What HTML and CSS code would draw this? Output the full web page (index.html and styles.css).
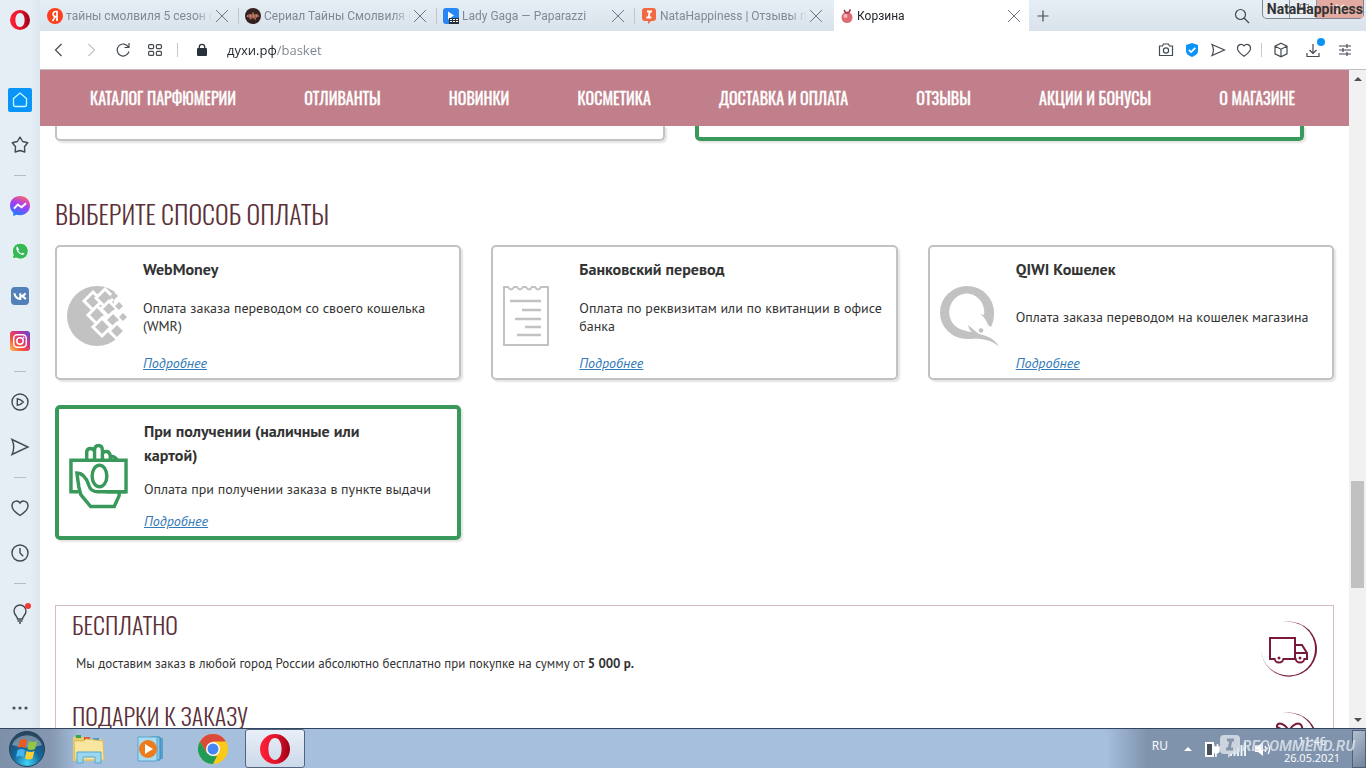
FILE: index.html
```html
<!DOCTYPE html>
<html lang="ru">
<head>
<meta charset="utf-8">
<title>Корзина</title>
<link rel="stylesheet" href="styles.css">
</head>
<body>
<div class="desktop">
  <div class="browser">
    <aside class="sidebar">
      <button class="side-logo" aria-label="Opera">
        <svg width="22" height="22" viewBox="0 0 22 22"><defs><linearGradient id="op" x1="0" x2="1"><stop offset="0" stop-color="#ff2038"/><stop offset=".55" stop-color="#e0142c"/><stop offset="1" stop-color="#9c0014"/></linearGradient></defs><path fill="url(#op)" fill-rule="evenodd" d="M11 1a10 10 0 1 0 0 20a10 10 0 1 0 0-20zM11 4c3 0 4.600 3 4.600 7s-1.600 7-4.600 7s-4.600-3-4.600-7s1.600-7 4.600-7z"/></svg>
      </button>
      <button class="side-item" aria-label="Домой"><svg width="24" height="24" viewBox="0 0 24 24"><rect width="24" height="24" rx="2" fill="#0a94f8"/><path d="M5.500 10.500L12 5l6.500 5.500v6a2 2 0 0 1-2 2h-9a2 2 0 0 1-2-2z" fill="none" stroke="#c8ffff" stroke-width="1.300"/></svg></button>
      <button class="side-item" aria-label="Закладки"><svg class="line" width="20" height="20" viewBox="0 0 20 20" stroke-linejoin="round"><path d="M10 2.200l2.700 4.300 5 1.300-3.200 4 .3 5.200-4.800-1.500L5.200 17l.3-5.200-3.200-4 5-1.300z"/></svg></button>
      <hr class="side-sep">
      <button class="side-item" aria-label="Messenger"><svg width="20" height="20" viewBox="0 0 20 20"><defs><linearGradient id="ms" x1=".7" y1="0" x2=".3" y2="1"><stop offset="0" stop-color="#ff6568"/><stop offset=".45" stop-color="#a43cf8"/><stop offset="1" stop-color="#1684ff"/></linearGradient></defs><path fill="url(#ms)" d="M10 0C4.300 0 0 4.100 0 9.500c0 2.900 1.200 5.400 3.200 7.100V20l3.300-1.300c1 .3 2.200.5 3.500.5 5.700 0 10-4.300 10-9.700S15.700 0 10 0z"/><path d="M4 12.700l3.800-4.200 3.800 2.700 4.400-4" fill="none" stroke="#fff" stroke-width="2"/></svg></button>
      <button class="side-item" aria-label="WhatsApp"><svg width="18" height="18" viewBox="0 0 18 18"><path d="M1 17l1.200-4.200A8 8 0 1 1 5.200 16z" fill="#34b954" stroke="#f6fffa"/><path d="M6.200 4.600c-1.700 1-.8 4 1.300 6.100s4.900 3.100 6.100 1.100l-2.300-1.400-1 1c-1.400-.6-2.400-1.700-3-3l.9-1z" fill="#fff"/></svg></button>
      <button class="side-item" aria-label="ВКонтакте"><svg width="18" height="18" viewBox="0 0 18 18"><rect width="18" height="18" rx="4" fill="#5181b8"/><path d="M3.300 6.300c.8 3.800 2.600 5.600 6 5.600V6.200M14.400 6.200c-.8 1.700-2.300 2.900-5 3M9.500 9c2.600 0 4 1.300 5.300 3.200" fill="none" stroke="#fff" stroke-width="2"/></svg></button>
      <button class="side-item" aria-label="Instagram"><svg width="20" height="20" viewBox="0 0 20 20"><defs><linearGradient id="ig" x1="0" y1="1" x2="1" y2="0"><stop offset="0" stop-color="#ffc653"/><stop offset=".35" stop-color="#f4513e"/><stop offset=".65" stop-color="#cf2e8c"/><stop offset="1" stop-color="#5450cf"/></linearGradient></defs><rect width="20" height="20" rx="3" fill="url(#ig)"/><g fill="none" stroke="#fff" stroke-width="1.500"><rect x="3.700" y="3.700" width="12.600" height="12.600" rx="3.500"/><circle cx="10" cy="10" r="3.200"/></g><circle cx="13.600" cy="6.400" r=".9" fill="#fff"/></svg></button>
      <hr class="side-sep">
      <button class="side-item" aria-label="Плеер"><svg class="line" width="20" height="20" viewBox="0 0 20 20"><circle cx="10" cy="10" r="8"/><path d="M7.300 6.700q3.500.5 6 3.300q-2.500 2.800-6 3.300z"/></svg></button>
      <button class="side-item" aria-label="Моя лента"><svg class="line" width="20" height="20" viewBox="0 0 20 20"><path d="M2 2.500L18 10 2 17.500Q5.500 10 2 2.500z"/></svg></button>
      <hr class="side-sep">
      <button class="side-item" aria-label="Избранное"><svg class="line" width="20" height="20" viewBox="0 0 20 20"><path d="M10 5C7.500 1.600 2 3 2 7.800c0 3.300 3.600 6.900 8 9.700 4.400-2.800 8-6.400 8-9.700C18 3 12.500 1.600 10 5z"/></svg></button>
      <button class="side-item" aria-label="История"><svg class="line" width="20" height="20" viewBox="0 0 20 20"><circle cx="10" cy="10" r="8"/><path d="M10 5v5l3.200 3.200"/></svg></button>
      <hr class="side-sep">
      <button class="side-item" aria-label="Советы"><svg width="24" height="24" viewBox="0 0 24 24"><path class="line" d="M9.500 17c0-3-3.500-3.700-3.500-8a6 6 0 0 1 12 0c0 4.300-3.500 5-3.500 8zM9.500 19h5M11 21h2"/><circle cx="20" cy="4" r="3" fill="#f23a34"/></svg></button>
      <button class="side-more" aria-label="Ещё"><svg width="20" height="6" viewBox="0 0 20 6" fill="#4b525a"><circle cx="4" cy="3" r="1.600"/><circle cx="10" cy="3" r="1.600"/><circle cx="16" cy="3" r="1.600"/></svg></button>
    </aside>

    <div class="window">
      <header class="tabs">
        <div class="tab">
          <svg width="16" height="16" viewBox="0 0 16 16"><circle cx="8" cy="8" r="8" fill="#fc3f1d"/><path d="M10 13V3.500H8.600c-3.300 0-3.200 5 0 5H10M8.500 8.500L5.500 13" fill="none" stroke="#fff" stroke-width="1.700"/></svg>
          <button class="tab-title">тайны смолвиля 5 сезон с</button><button class="close" aria-label="Закрыть"></button>
        </div>
        <div class="tab">
          <svg width="16" height="16" viewBox="0 0 16 16"><circle cx="8" cy="8" r="8" fill="#33211f"/><path d="M1.500 8.500q3-4 5-2l1.500-3 1.500 3q3-2 5 2l-3 1-1 3-1.500-2h-2L5 12l-1-2.500z" fill="#a2624f"/><path d="M2 8h12" stroke="#e3c5b9" stroke-dasharray="1 2"/></svg>
          <button class="tab-title">Сериал Тайны Смолвиля (</button><button class="close" aria-label="Закрыть"></button>
        </div>
        <div class="tab">
          <svg width="16" height="16" viewBox="0 0 16 16"><rect width="16" height="16" rx="3" fill="#2787f5"/><path d="M5 3.500v8L11 7.500z" fill="#fff"/><path d="M6 10h10v6H6z" fill="#263238"/><path d="M7 11h2v1H7zm3 0h2v1h-2zm3 0h2v1h-2zM7 13h2v1H7zm3 0h2v1h-2zm3 0h2v1h-2z" fill="#fff"/></svg>
          <button class="tab-title">Lady Gaga — Paparazzi</button><button class="close" aria-label="Закрыть"></button>
        </div>
        <div class="tab">
          <svg width="16" height="16" viewBox="0 0 16 16"><path d="M4 0h8q3 0 3 3v7q0 3-3 3h-2l-3 3v-3H4q-3 0-3-3V3q0-3 3-3z" fill="#f26842"/><path d="M6 3.500h5M5.300 9.500h5M8.700 3.500l-1 6" stroke="#fff" stroke-width="1.800"/></svg>
          <button class="tab-title">NataHappiness | Отзывы п</button><button class="close" aria-label="Закрыть"></button>
        </div>
        <div class="tab tab--active">
          <svg width="13" height="16" viewBox="0 0 13 16"><circle cx="6" cy="9.500" r="5.500" fill="#dc6b74"/><circle cx="4.500" cy="8" r="2" fill="#f6b8bb"/><path d="M3 2l1.500 2.500M9.500 1.500L8 4M3.500 4.500h5" fill="none" stroke="#a33445" stroke-width="1.500"/></svg>
          <button class="tab-title">Корзина</button><button class="close" aria-label="Закрыть"></button>
        </div>
        <button class="new-tab" aria-label="Новая вкладка"><svg class="line" width="12" height="12" viewBox="0 0 12 12"><path d="M6 .5v11M.5 6h11"/></svg></button>
        <button class="tab-search" aria-label="Поиск"><svg class="line" width="16" height="16" viewBox="0 0 16 16"><circle cx="6.500" cy="6.500" r="5"/><path d="M10 10l5 5"/></svg></button>
        <div class="win-controls">
          <button aria-label="Свернуть"></button><button aria-label="Развернуть"><svg width="12" height="10" viewBox="0 0 12 10" fill="#eef1f5" stroke="#8d969f"><rect x="3.500" y=".5" width="8" height="6"/><rect x=".5" y="3.500" width="8" height="6"/></svg></button><button class="win-close" aria-label="Закрыть окно"><svg width="10" height="10" viewBox="0 0 10 10"><path d="M1 1l8 8M9 1L1 9" stroke="#f7e4e1" stroke-width="2.500"/></svg></button>
          <span class="user-mark">NataHappiness</span>
        </div>
      </header>

      <div class="toolbar">
        <button aria-label="Назад"><svg class="line" width="16" height="16" viewBox="0 0 16 16"><path d="M10.500 2l-6 6 6 6"/></svg></button>
        <button aria-label="Вперёд"><svg class="line line--dim" width="16" height="16" viewBox="0 0 16 16"><path d="M5.500 2l6 6-6 6"/></svg></button>
        <button aria-label="Обновить"><svg class="line" width="16" height="16" viewBox="0 0 16 16"><path d="M13.500 5.200A6 6 0 1 0 14 9.500M14 1v4.500H9.500"/></svg></button>
        <button aria-label="Экспресс-панель"><svg class="line" width="14" height="12" viewBox="0 0 14 12"><rect x=".6" y=".6" width="5" height="4" rx="1"/><rect x="8.400" y=".6" width="5" height="4" rx="1"/><rect x=".6" y="7.400" width="5" height="4" rx="1"/><rect x="8.400" y="7.400" width="5" height="4" rx="1"/></svg></button>
        <span class="bar-sep"></span>
        <svg class="lock" width="12" height="14" viewBox="0 0 12 14"><rect x="1" y="5" width="10" height="8" rx="1" fill="#27333c"/><path d="M3.300 6V4a2.700 2.700 0 0 1 5.400 0v2" fill="none" stroke="#27333c" stroke-width="1.300"/></svg>
        <input class="address" type="text" aria-label="Адрес" value="духи.рф/basket">
        <div class="tools">
          <button aria-label="Снимок"><svg class="line" width="16" height="16" viewBox="0 0 16 16"><path d="M1.500 4h3l1-2h5l1 2h3v9.500h-13z"/><circle cx="8" cy="8.500" r="2.600"/></svg></button>
          <button aria-label="Защита"><svg width="14" height="16" viewBox="0 0 14 16"><path d="M7 1l6 2v6c0 3-3 4.800-6 6-3-1.200-6-3-6-6V3z" fill="#0a94f8"/><path d="M3.800 7.800l2.300 2.300 4.200-4.200" fill="none" stroke="#fff" stroke-width="1.700"/></svg></button>
          <button aria-label="Отправить"><svg class="line" width="16" height="16" viewBox="0 0 16 16"><path d="M2 2.500L14.500 8 2 13.500Q4.800 8 2 2.500z"/></svg></button>
          <button aria-label="В избранное"><svg class="line" width="16" height="16" viewBox="0 0 16 16"><path d="M8 4C6 1.200 1.500 2.300 1.500 6.200c0 2.700 3 5.600 6.500 8 3.500-2.400 6.500-5.300 6.500-8C14.500 2.300 10 1.200 8 4z"/></svg></button>
          <span class="bar-sep bar-sep--tight"></span>
          <button aria-label="Кошелёк"><svg class="line" width="16" height="16" viewBox="0 0 16 16"><path d="M8 1.200l6 3v7.600l-6 3-6-3V4.200zM2 4.200l6 3 6-3M8 7.200v7.600"/></svg></button>
          <button class="download" aria-label="Загрузки"><svg class="line" width="16" height="16" viewBox="0 0 16 16"><path d="M8 2v9M4.500 8L8 11.500 11.500 8M2 11v3.500h12V11"/></svg><span class="dot"></span></button>
          <button aria-label="Настройки"><svg class="line" width="14" height="14" viewBox="0 0 14 14"><path d="M1 3h12M1 7h12M1 11h12M9 1v4M5 5v4M9 9v4"/></svg></button>
        </div>
      </div>

      <div class="viewport">
        <main class="page">
          <nav class="menu">
            <a href="#">Каталог парфюмерии</a><a href="#">Отливанты</a><a href="#">Новинки</a><a href="#">Косметика</a><a href="#">Доставка и оплата</a><a href="#">Отзывы</a><a href="#">Акции и бонусы</a><a href="#">О магазине</a>
          </nav>
          <div class="delivery"><div class="delivery-card"></div><div class="delivery-card delivery-card--active"></div></div>

          <section class="payment">
            <h2 class="heading">Выберите способ оплаты</h2>
            <div class="cards">
              <div class="card">
                <svg class="card-icon" width="60" height="60" viewBox="0 0 60 60"><circle cx="30" cy="30" r="30" fill="#c2c2c2"/><path d="M47 6l16 2v45l-12-1-6-7 3-8-3-10 2-9z" fill="#fff"/><g fill="#c2c2c2" stroke="#fff" stroke-width="3"><path d="M26 6l9 9-9 9-9-9z"/><path d="M38 3l9 9-9 9-9-9z"/><path d="M30 20l9 9-9 9-9-9z"/><path d="M42 15l8 8-8 8-8-8z"/><path d="M35 32l9 9-9 9-9-9z"/><path d="M46 26l8 8-8 8-8-8z"/><path d="M50 37l8 8-8 8-8-8z"/></g><path d="M47 6l4 4-4 4-4-4zM52 16l4 4-4 4-4-4zM56 27l4 4-4 4-4-4z" fill="#c2c2c2"/></svg>
                <div class="card-body">
                  <label class="card-title" for="p1"><input class="radio" type="radio" name="pay" id="p1">WebMoney</label>
                  <p class="card-text">Оплата заказа переводом со своего кошелька (WMR)</p>
                  <a class="more" href="#">Подробнее</a>
                </div>
              </div>
              <div class="card">
                <svg class="card-icon" width="60" height="60" viewBox="0 0 60 60" fill="none" stroke="#c2c2c2" stroke-width="2"><path d="M1 60V1h4q3 5 6 0h3q3 5 6 0h3q3 5 6 0h3q3 5 6 0h7v58H1"/><path d="M7 15h31M19 24h19M12 33h26M22 41h16M14 49h24" stroke-width="2.500"/></svg>
                <div class="card-body">
                  <label class="card-title" for="p2"><input class="radio" type="radio" name="pay" id="p2">Банковский перевод</label>
                  <p class="card-text">Оплата по реквизитам или по квитанции в офисе банка</p>
                  <a class="more" href="#">Подробнее</a>
                </div>
              </div>
              <div class="card">
                <svg class="card-icon" width="60" height="60" viewBox="0 0 60 60"><path fill="#c2c2c2" fill-rule="evenodd" d="M27 0a27 26.500 0 1 0 0 53q5 0 9-.5 10 1 15 3 4 2 8 5-5-8-13-10.500-4-1.500-7-2-4-3-11-9 1 5 4 7-5-.5-7-1.500A17.500 18.500 0 1 1 44 29q-2-.5-4-1.500 6 5 8 11.500l3 2q3-6 3-14A27 26.500 0 0 0 27 0z"/><circle cx="41" cy="44.500" r="2.300" fill="#c2c2c2"/></svg>
                <div class="card-body">
                  <label class="card-title" for="p3"><input class="radio" type="radio" name="pay" id="p3">QIWI Кошелек</label>
                  <p class="card-text">Оплата заказа переводом на кошелек магазина</p>
                  <a class="more" href="#">Подробнее</a>
                </div>
              </div>
              <div class="card card--active">
                <svg class="card-icon" width="59" height="66" viewBox="0 0 60 66" fill="none" stroke="#38995a" stroke-width="3.500"><path d="M10 49H2V17h56v32H38"/><path d="M18 17V9q0-4 4-4 3 0 4 3V7q0-5 4-5t4 5v3q1-2 4-2 3 0 4 4v5M26 8v9M34 9v8M42 13q5 0 7 4"/><ellipse cx="31" cy="33" rx="7.500" ry="11"/><path d="M8 30q8 0 12 12 2 7 9 7h22v4l-5 11H22L12 52l-2-8zM48 49h10"/></svg>
                <div class="card-body">
                  <label class="card-title" for="p4"><input class="radio" type="radio" name="pay" id="p4" checked>При получении (наличные или картой)</label>
                  <p class="card-text">Оплата при получении заказа в пункте выдачи</p>
                  <a class="more" href="#">Подробнее</a>
                </div>
              </div>
            </div>
          </section>

          <section class="bonuses">
            <article class="bonus">
              <div>
                <h2 class="heading heading--small">Бесплатно</h2>
                <p class="bonus-text">Мы доставим заказ в любой город России абсолютно бесплатно при покупке на сумму от <b>5 000 р.</b></p>
              </div>
              <svg class="bonus-icon" width="58" height="58" viewBox="0 0 58 58"><defs><linearGradient id="ring" x1="0" x2="1"><stop offset="0" stop-color="#7a1a3a" stop-opacity=".5"/><stop offset=".4" stop-color="#7a1a3a"/></linearGradient></defs><path fill="url(#ring)" d="M22 2.500A28 27.500 0 1 1 1 29 28 27 0 0 0 29 55.500 26 26.500 0 0 0 55 29 27 26.500 0 0 0 22 2.500z"/><g fill="none" stroke="#7a1a3a" stroke-width="2"><path d="M14 39h-4V18h25v21H24M35 25h7l5 8v6h-2M35 39V25M36 33h10"/><path d="M14.500 38a4.500 4.500 0 0 0 9 0M35.500 38a4.500 4.500 0 0 0 9 0"/></g><circle cx="19" cy="38" r="1.500" fill="#7a1a3a"/><circle cx="40" cy="38" r="1.500" fill="#7a1a3a"/></svg>
            </article>
            <article class="bonus">
              <div><h2 class="heading heading--small">Подарки к заказу</h2></div>
              <svg class="bonus-icon" width="58" height="58" viewBox="0 0 58 58"><path fill="url(#ring)" d="M22 2.500A28 27.500 0 1 1 1 29 28 27 0 0 0 29 55.500 26 26.500 0 0 0 55 29 27 26.500 0 0 0 22 2.500z"/><path d="M29 22C27 12 16 10 17 16t12 6c12 0 14 0 13-6S31 12 29 22z" fill="none" stroke="#7a1a3a" stroke-width="2"/></svg>
            </article>
          </section>
        </main>
        <div class="scrollbar"><span class="arrow arrow--up"></span><span class="thumb"></span><span class="arrow arrow--down"></span></div>
      </div>
    </div>
  </div>

  <footer class="taskbar">
    <button class="start" aria-label="Пуск"><svg width="38" height="38" viewBox="0 0 38 38"><defs><radialGradient id="orb" cx=".5" cy=".9" r=".8"><stop offset="0" stop-color="#3fd6f8"/><stop offset=".5" stop-color="#14689e"/><stop offset="1" stop-color="#264864"/></radialGradient></defs><circle cx="19" cy="19" r="17.500" fill="url(#orb)" stroke="#263f56"/><path d="M4 15a15.500 13 0 0 1 30 0q-15 5-30 0z" fill="#fff" opacity=".35"/><path d="M12 10q4-2 7 0l-1.500 8q-4-2-7.500 0z" fill="#ec5a24"/><path d="M21 11q4 2 8 0l-2 8q-4 2-7.500 0z" fill="#93c83e"/><path d="M9.500 20q4-2 7.500 0l-1.500 7q-4-2-7.500 0z" fill="#45b5f0"/><path d="M18.500 21q4 2 8 0l-2 7.500q-4 2-7.500 0z" fill="#fccf35"/></svg></button>
    <button class="task" aria-label="Проводник"><svg width="34" height="30" viewBox="0 0 34 30"><path d="M1 3h10l2 2h17v22H1z" fill="#e8cc68"/><path d="M4 1h5v3H4z" fill="#36a647"/><path d="M12 3h6v3h-6z" fill="#d85839"/><path d="M21 4h6v3h-6z" fill="#4897d0"/><path d="M2 7h10l2-2 17 2 1 19H3z" fill="#f8e5a0" stroke="#ddbd5a"/><path d="M5 29V18h24v11h-6v-6H11v6z" fill="#9bd8f0" stroke="#57a7cd"/></svg></button>
    <button class="task" aria-label="Медиаплеер"><svg width="30" height="28" viewBox="0 0 30 28"><path d="M18 3h9v21h-9z" fill="#58a0ce"/><path d="M15 2h9v23h-9z" fill="#87c6e6" stroke="#3b85b5"/><path d="M2 2h19v24H2z" fill="#a9dcf0" stroke="#5aa4ce"/><circle cx="12" cy="14" r="9" fill="#ee7b1c"/><path d="M9 9v10l8-5z" fill="#fff"/></svg></button>
    <button class="task" aria-label="Chrome"><svg width="30" height="30" viewBox="0 0 30 30"><circle cx="15" cy="15" r="15" fill="#fbc918"/><path d="M2 7.500A15 15 0 0 1 28 7.500H15L8.500 19z" fill="#dc4a3c"/><path d="M2 7.500l6.500 11.300 6.500 3.500L19 22l-4 8A15 15 0 0 1 2 7.500z" fill="#1f9d58"/><circle cx="15" cy="15" r="7" fill="#fff"/><circle cx="15" cy="15" r="5.500" fill="#4486f4"/></svg></button>
    <button class="task task--active" aria-label="Opera"><svg width="30" height="30" viewBox="0 0 22 22"><path fill="url(#op)" fill-rule="evenodd" d="M11 0a11 11 0 1 0 0 22a11 11 0 1 0 0-22zM11 3c3 0 4.800 3.500 4.800 8s-1.800 8-4.800 8s-4.800-3.500-4.800-8s1.800-8 4.800-8z"/></svg></button>
    <div class="tray">
      <span class="lang">RU</span>
      <span class="tray-up"></span>
      <svg width="16" height="18" viewBox="0 0 16 18"><path d="M2 3h7v13H2z" fill="#45505c" stroke="#fff" stroke-width="2"/><path d="M8 7h7v3q0 3-3 3v4M9.500 7V4M13.500 7V4" fill="#fff" stroke="#fff" stroke-width="1.500"/></svg>
      <svg width="20" height="18" viewBox="0 0 20 18" fill="#eef3f8"><path d="M3 13h2v3H3zM6.500 11h2v5h-2zM10 8h2v8h-2zM13.500 5h2v11h-2zM17 2h2v14h-2z"/></svg>
      <svg width="18" height="16" viewBox="0 0 18 16"><path d="M1 5h3l5-4v14l-5-4H1z" fill="#fff"/><path d="M11 5q2 3 0 6M14 3q3 5 0 10" fill="none" stroke="#fff" stroke-width="1.300"/></svg>
      <div class="clock"><time>11:46</time><span>26.05.2021</span></div>
      <button class="show-desktop" aria-label="Показать рабочий стол"></button>
      <div class="watermark"><svg width="22" height="24" viewBox="0 0 22 24"><path d="M5 1h12q4 0 4 4v11q0 4-4 4h-4l-4 4v-4H5q-4 0-4-4V5q0-4 4-4z" fill="#dfe5ec"/><path d="M8 6h7M7 15h7M12 6l-2 9" stroke="#8596ac" stroke-width="3"/></svg><span>RECOMMEND.RU</span></div>
    </div>
  </footer>
</div>
</body>
</html>
```
FILE: styles.css
```css
* { box-sizing: border-box; }
body {
  margin: 0;
  font-family: "PT Sans", "Noto Sans", sans-serif;
  font-size: 14px;
  color: #333;
}
button {
  display: flex;
  align-items: center;
  justify-content: center;
  padding: 0;
  border: 0;
  background: none;
  font: inherit;
  color: inherit;
}
h2, p { margin: 0; }
svg { flex: none; }
.line { fill: none; stroke: #434a52; stroke-width: 1.2; }
.line--dim { stroke: #bfc3c8; }

.desktop { display: flex; flex-direction: column; height: 100vh; overflow: hidden; }
.browser { display: flex; flex: 1; min-height: 0; }

/* Sidebar */
.sidebar {
  display: flex;
  flex-direction: column;
  flex: none;
  width: 40px;
  background: linear-gradient(90deg, #e5edf5 75%, #dce7f0);
}
.side-logo { height: 40px; margin-bottom: 37px; }
.side-item { height: 45px; flex: none; }
.side-item .line { stroke-width: 1.4; }
.side-sep {
  flex: none;
  width: 12px;
  height: 1px;
  margin: 8px auto 7px;
  border: 0;
  background: #b6bdc5;
}
.side-more { height: 40px; margin-top: auto; }

/* Tabs */
.window { display: flex; flex-direction: column; flex: 1; min-width: 0; }
.tabs {
  display: flex;
  flex: none;
  height: 31px;
  padding-left: 2px;
  background: linear-gradient(#e6eef6, #d9e1ea);
  font-family: Roboto, "Open Sans", sans-serif;
  font-size: 12px;
  color: #7f8a95;
}
.tab {
  display: flex;
  align-items: center;
  gap: 3px;
  flex: 0 1 198px;
  min-width: 0;
  padding: 0 12px 0 5px;
  position: relative;
}
.tab:not(.tab--active)::after {
  content: "";
  position: absolute;
  right: 1px;
  top: 8px;
  bottom: 7px;
  width: 1px;
  background: #bfc6ce;
}
.tab:nth-child(4)::after { display: none; }
.tab-title {
  display: block;
  flex: 1;
  min-width: 0;
  text-align: left;
  white-space: nowrap;
  overflow: hidden;
  mask-image: linear-gradient(90deg, #000 88%, transparent);
}
.tab--active { flex-basis: 195px; padding: 0 9px 0 7px; background: #fff; color: #22272c; }
.close {
  flex: none;
  width: 12px;
  height: 12px;
  background:
    linear-gradient(45deg, transparent 47%, #6d7680 47% 53%, transparent 53%),
    linear-gradient(-45deg, transparent 47%, #6d7680 47% 53%, transparent 53%);
}
.new-tab { width: 28px; }
.tab-search { width: 28px; margin-left: auto; }
.win-controls {
  display: flex;
  position: relative;
  width: 102px;
  height: 19px;
  margin: 0 2px 0 6px;
  border: 1px solid #7d8690;
  border-top: 0;
  border-radius: 0 0 5px 5px;
  background: #e9eef4;
}
.win-controls button { width: 27px; border-right: 1px solid #8e979f; }
.win-controls .win-close { flex: 1; border: 0; background: #e3aaa2; }
.user-mark {
  position: absolute;
  right: 0;
  top: 1px;
  font: 700 14px/17px Roboto, sans-serif;
  color: #333;
}

/* Toolbar */
.toolbar {
  display: flex;
  align-items: center;
  flex: none;
  height: 39px;
  padding: 0 13px 0 3px;
  border-bottom: 1px solid #c5bcc3;
  background: #fff;
}
.toolbar > button { width: 32px; height: 32px; }
.bar-sep { width: 1px; height: 14px; margin: 0 18px 0 6px; background: #c4c9ce; }
.lock { margin-right: 19px; }
.address {
  flex: 1;
  min-width: 0;
  padding: 0 0 1px;
  border: 0;
  outline: 0;
  font: 13px "Segoe UI", "Open Sans", sans-serif;
  background: linear-gradient(90deg, #1d2328 50px, #7a848d 50px);
  background-clip: text;
  -webkit-text-fill-color: transparent;
}
.tools { display: flex; align-items: center; gap: 10px; }
.tools button { width: 16px; height: 24px; position: relative; }
.bar-sep--tight { margin: 0 1px 0 -1px; }
.download { margin: 0 6px; }
.dot { position: absolute; top: 0; right: -4px; width: 8px; height: 8px; border-radius: 50%; background: #0a94f8; }

/* Page */
.viewport { display: flex; flex: 1; min-height: 0; background: #fff; }
.page { flex: 1; min-width: 0; overflow: hidden; }
.menu {
  display: flex;
  align-items: center;
  justify-content: space-between;
  height: 56px;
  padding: 0 54px 0 50px;
  background: #c07f8a;
}
.menu a {
  font: 400 16px "Oswald", "Liberation Sans Narrow", sans-serif;
  color: #fff;
  -webkit-text-stroke: 0.3px #fff;
  text-decoration: none;
  text-transform: uppercase;
  white-space: nowrap;
}
.delivery { display: grid; grid-template-columns: 1fr 1fr; gap: 30px; padding: 0 45px 0 15px; }
.delivery-card {
  height: 15px;
  border: 2px solid #c2c2c2;
  border-top: 0;
  border-radius: 0 0 5px 5px;
  box-shadow: 2px 2px 2px #e4e4e4;
}
.delivery-card--active { border-color: #38995a; border-width: 0 4px 4px; }
.payment { padding: 53px 15px 0; }
.heading {
  font: 300 26px/40px "Oswald", "Liberation Sans Narrow", sans-serif;
  color: #5b3038;
  text-transform: uppercase;
}
.cards {
  display: grid;
  grid-template-columns: repeat(3, 1fr);
  grid-auto-rows: minmax(135px, auto);
  gap: 25px 30px;
  margin-top: 11px;
}
.card {
  display: flex;
  gap: 16px;
  padding: 10px 10px 5px;
  border: 2px solid #c2c2c2;
  border-radius: 5px;
  box-shadow: 2px 2px 2px #e4e4e4;
}
.card--active { border: 4px solid #38995a; }
.card-icon { align-self: center; margin-top: 2px; }
.card-body { display: flex; flex-direction: column; align-items: flex-start; flex: 1; min-width: 0; }
.card-title {
  max-width: 250px;
  font-size: 16px;
  font-weight: 700;
  line-height: 24px;
}
.radio { position: absolute; opacity: 0; }
.card-text { display: flex; align-items: center; flex: 1; line-height: 18px; }
.more { line-height: 20px; font-style: italic; color: #337ab7; }

.bonuses { margin: 65px 15px 0; padding: 0 15px 0 16px; border: 1px solid #d3bfc3; }
.bonus { display: flex; justify-content: space-between; min-height: 91px; }
.heading--small { font-size: 24px; line-height: 37px; }
.bonus-text { padding: 11px 4px 0; line-height: 20px; font-size: 13px; }
.bonus-icon { margin-top: 14px; }

.scrollbar {
  display: flex;
  flex-direction: column;
  align-items: center;
  flex: none;
  width: 17px;
  padding: 7px 0 6px;
  background: #f1f1f1;
}
.arrow { border: 4px solid transparent; }
.arrow--up { border-top: 0; border-bottom-color: #505050; }
.arrow--down { border-bottom: 0; border-top-color: #505050; }
.thumb { width: 13px; height: 107px; margin: auto 0 130px; background: #c1c1c1; }

/* Taskbar */
.taskbar {
  display: flex;
  align-items: stretch;
  flex: none;
  height: 40px;
  border-top: 1px solid #33455e;
  background: linear-gradient(90deg, #7d90aa 0, #8496b0 50px, #a6bfdd 80px, #a6bfdd 81%, #8093ad 84%, #8093ad);
}
.start { width: 54px; margin-right: 4px; }
.task { width: 62px; }
.task--active {
  width: 60px;
  margin-left: 1px;
  border: 1px solid #53657d;
  border-radius: 3px;
  background: linear-gradient(#e9eff7, #cbd9ea);
}
.tray { display: flex; align-items: center; margin-left: auto; position: relative; color: #fff; font: 11px/17px "Segoe UI", "Open Sans", sans-serif; }
.lang { margin: 0 16px 6px 0; font-size: 12px; }
.tray-up { margin-right: 12px; border: 4px solid transparent; border-top: 0; border-bottom-color: #fff; }
.tray svg { margin-right: 7px; }
.clock { display: flex; flex-direction: column; align-items: center; margin: 0 12px 0 5px; }
.show-desktop { width: 14px; height: 38px; border: 1px solid #4f6077; background: linear-gradient(135deg, #b3c0d0, #70839c); }
.watermark {
  position: absolute;
  right: 11px;
  top: 5px;
  display: flex;
  align-items: center;
  font: italic 700 15px/20px Roboto, sans-serif;
  color: #dfe5ec;
  opacity: 0.8;
}
.tray .watermark svg { margin-right: 1px; }
```
